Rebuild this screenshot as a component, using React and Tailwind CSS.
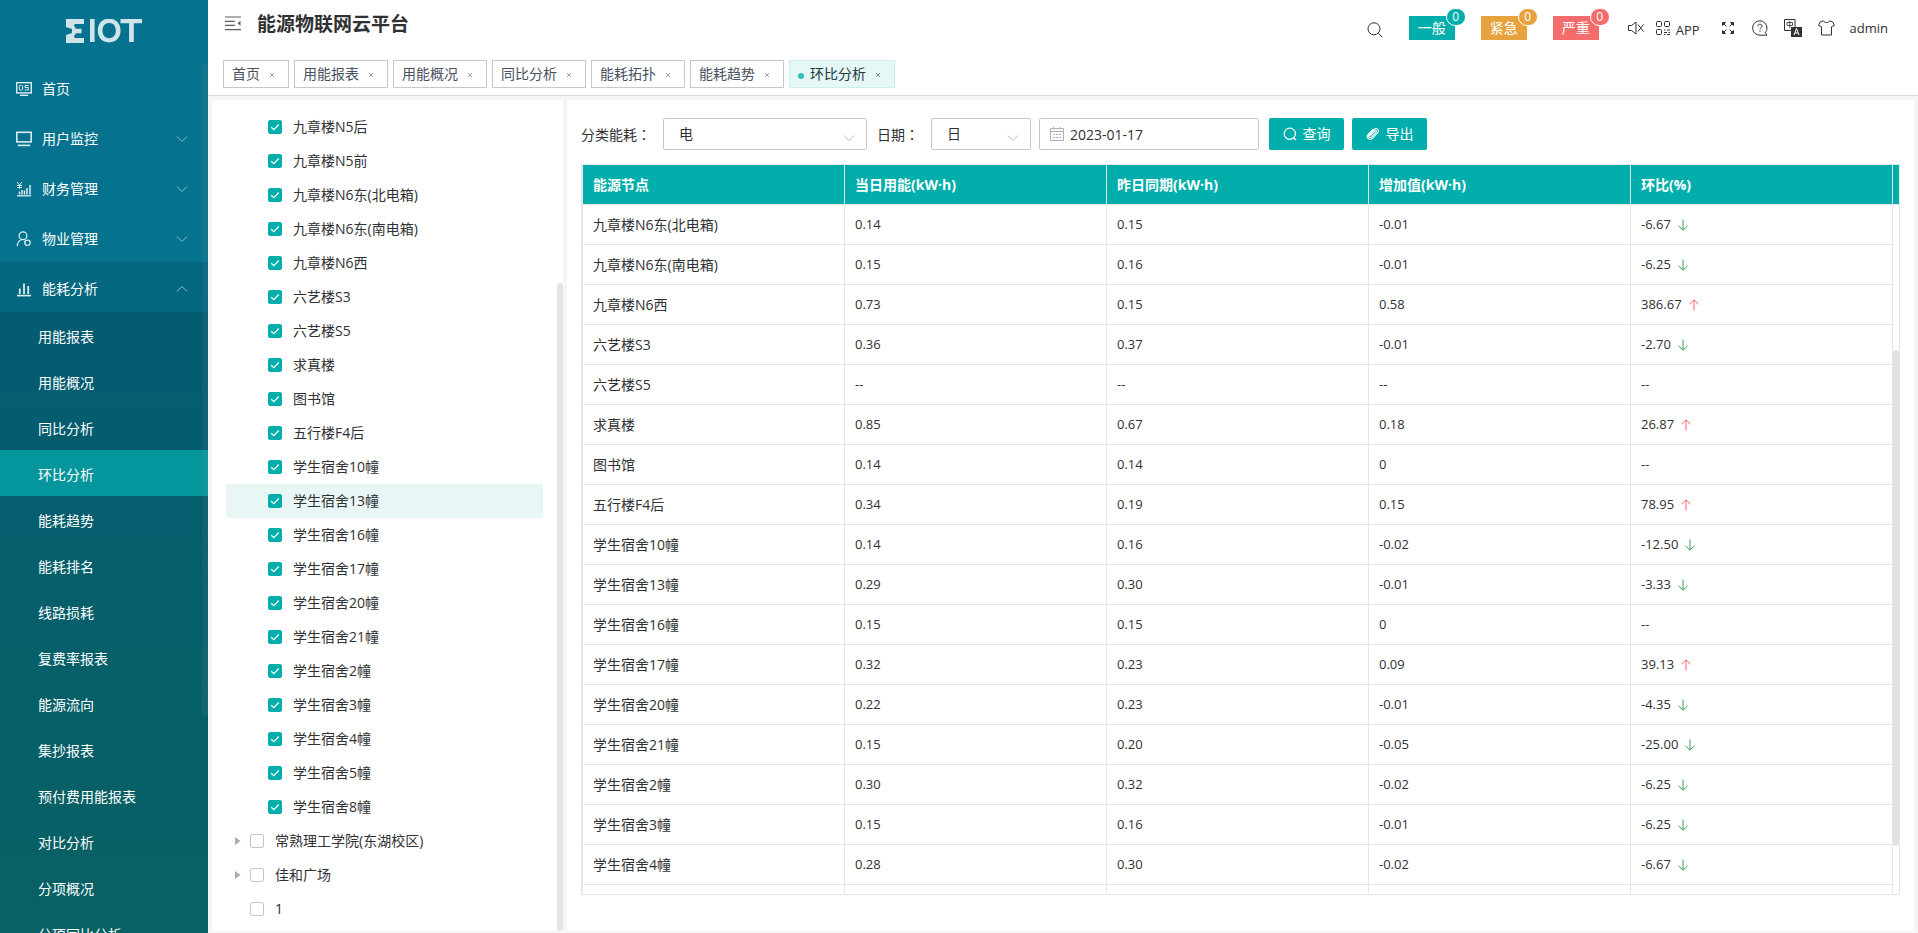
import { useState } from 'react';

const menus = [
  { name: '首页', icon: 'home' },
  { name: '用户监控', icon: 'monitor', group: true },
  { name: '财务管理', icon: 'finance', group: true },
  { name: '物业管理', icon: 'property', group: true },
  { name: '能耗分析', icon: 'chart', group: true, open: true },
];

const subMenus = [
  '用能报表', '用能概况', '同比分析', '环比分析', '能耗趋势', '能耗排名', '线路损耗',
  '复费率报表', '能源流向', '集抄报表', '预付费用能报表', '对比分析', '分项概况', '分项同比分析',
];

const tabs = ['首页', '用能报表', '用能概况', '同比分析', '能耗拓扑', '能耗趋势', '环比分析'];

const treeNodes = [
  '九章楼N5后', '九章楼N5前', '九章楼N6东(北电箱)', '九章楼N6东(南电箱)', '九章楼N6西',
  '六艺楼S3', '六艺楼S5', '求真楼', '图书馆', '五行楼F4后', '学生宿舍10幢', '学生宿舍13幢',
  '学生宿舍16幢', '学生宿舍17幢', '学生宿舍20幢', '学生宿舍21幢', '学生宿舍2幢',
  '学生宿舍3幢', '学生宿舍4幢', '学生宿舍5幢', '学生宿舍8幢',
];

const rootNodes = [
  { name: '常熟理工学院(东湖校区)', caret: true },
  { name: '佳和广场', caret: true },
  { name: '1', caret: false },
];

const columns = ['能源节点', '当日用能(kW·h)', '昨日同期(kW·h)', '增加值(kW·h)', '环比(%)'];

const rows = [
  ['九章楼N6东(北电箱)', '0.14', '0.15', '-0.01', '-6.67'],
  ['九章楼N6东(南电箱)', '0.15', '0.16', '-0.01', '-6.25'],
  ['九章楼N6西', '0.73', '0.15', '0.58', '386.67'],
  ['六艺楼S3', '0.36', '0.37', '-0.01', '-2.70'],
  ['六艺楼S5', '--', '--', '--', '--'],
  ['求真楼', '0.85', '0.67', '0.18', '26.87'],
  ['图书馆', '0.14', '0.14', '0', '--'],
  ['五行楼F4后', '0.34', '0.19', '0.15', '78.95'],
  ['学生宿舍10幢', '0.14', '0.16', '-0.02', '-12.50'],
  ['学生宿舍13幢', '0.29', '0.30', '-0.01', '-3.33'],
  ['学生宿舍16幢', '0.15', '0.15', '0', '--'],
  ['学生宿舍17幢', '0.32', '0.23', '0.09', '39.13'],
  ['学生宿舍20幢', '0.22', '0.23', '-0.01', '-4.35'],
  ['学生宿舍21幢', '0.15', '0.20', '-0.05', '-25.00'],
  ['学生宿舍2幢', '0.30', '0.32', '-0.02', '-6.25'],
  ['学生宿舍3幢', '0.15', '0.16', '-0.01', '-6.25'],
  ['学生宿舍4幢', '0.28', '0.30', '-0.02', '-6.67'],
  ['', '', '', '', ''],
];

const alarms = [
  { name: '一般', box: 'bg-[#02aeab]' },
  { name: '紧急', box: 'bg-[#e6a23c]' },
  { name: '严重', box: 'bg-[#f56c6c]' },
];

function Chevron({ up, className }) {
  return (
    <svg viewBox="0 0 12 8" fill="none" stroke="currentColor" className={className} aria-hidden="true">
      <path d={up ? 'M1 6.5 6 1.5 11 6.5' : 'M1 1.5 6 6.5 11 1.5'} />
    </svg>
  );
}

function MenuIcon({ type }) {
  const common = { viewBox: '0 0 16 16', fill: 'none', stroke: 'currentColor', className: 'size-4 shrink-0 text-[#dcecf0]', 'aria-hidden': true };
  if (type === 'home') {
    return (
      <svg {...common}>
        <rect x="0.7" y="1.7" width="14.6" height="10.2" strokeWidth="1.4" />
        <rect x="3.2" y="4.5" width="3.4" height="4.5" rx="1" />
        <path d="M12.8 4.5H9v2h3.3v2.4H8.700" />
        <path d="M4 14.3h8" strokeWidth="1.4" />
      </svg>
    );
  }
  if (type === 'monitor') {
    return (
      <svg {...common} strokeWidth="1.6">
        <rect x="0.8" y="1.3" width="14.4" height="9.6" />
        <path d="M1.8 14.4h12.4" />
      </svg>
    );
  }
  if (type === 'finance') {
    return (
      <svg {...common}>
        <path d="M1 1l2.5 3L6 1M3.5 4v4M1 4.5h5M1 6.5h5" />
        <path d="M1 14.8h14" strokeWidth="1.3" />
        <path d="M3.5 13.5v-3M6 13.5v-4.5M8.5 13.5v-4M11 13.5V7M14 13.5V4" strokeWidth="1.5" />
      </svg>
    );
  }
  if (type === 'property') {
    return (
      <svg {...common} strokeWidth="1.2">
        <circle cx="7" cy="4.700" r="3.9" />
        <path d="M1.3 15.2c0-3.4 1.7-5.6 4.2-6.4" />
        <circle cx="11.500" cy="11.800" r="2.700" />
        <path d="M8 10.500l1.500 1M10.500 15l.5-1" />
      </svg>
    );
  }
  return (
    <svg {...common}>
      <path d="M1 14.6h14" strokeWidth="1.6" />
      <path d="M3.8 13V7.5M8 13V2.5M12.2 13V5" strokeWidth="1.8" />
    </svg>
  );
}

function Trend({ value }) {
  if (!value || value === '--') return null;
  const down = value.startsWith('-');
  return (
    <svg
      viewBox="0 0 12 12"
      fill="none"
      stroke="currentColor"
      className={`ml-1.5 size-3 ${down ? 'text-[#3a9e5c]' : 'text-[#f5606c]'}`}
      aria-hidden="true"
    >
      <path d={down ? 'M6 .5v10.5M1.5 6.8 6 11.2l4.5-4.4' : 'M6 11.5V1M1.5 5.2 6 .8l4.5 4.4'} />
    </svg>
  );
}

function Sidebar() {
  return (
    <aside className="relative flex w-52 shrink-0 flex-col overflow-hidden bg-linear-to-b from-[#05738f] from-30% to-[#0b7a7c] text-sm text-white">
      <div className="flex h-[62px] shrink-0 items-center justify-center">
        <svg viewBox="0 0 76 24" className="h-6 w-[76px] text-[#cfe4ea]" fill="currentColor" role="img" aria-label="EIOT">
          <path d="M0 0h18v5H9L7.800 6.500 10 9.700h5.500v4.600H10l-2.200 3.200L9 19h9v5H0v-8l6-2v-4L0 8z" />
          <path d="M24 0h4.6v23H24z" />
          <path fillRule="evenodd" d="M43 -.3c7 0 11.6 4.9 11.6 11.9S50 23.4 43 23.4 31.8 18.6 31.8 11.6 36 -.3 43-.3zm.2 4.2c-4.2 0-6.7 3-6.7 7.7s2.5 7.6 6.7 7.6 6.600-3 6.600-7.600-2.400-7.700-6.600-7.700z" />
          <path d="M54.5 0H76v4.2h-8.200V23h-4.700V4.200h-8.600z" />
        </svg>
      </div>
      <nav>
        {menus.map((m) => (
          <button
            key={m.name}
            type="button"
            className={`flex h-[50px] w-full items-center px-4 pt-1 ${m.open ? 'bg-black/10' : ''}`}
          >
            <MenuIcon type={m.icon} />
            <span className="ml-2.5">{m.name}</span>
            {m.group && <Chevron up={m.open} className="mr-1 ml-auto h-2 w-3 text-[#8fc0cd]" />}
          </button>
        ))}
        <div className="bg-black/20">
          {subMenus.map((name) => (
            <a
              key={name}
              href="#"
              className={`flex h-[46px] items-center pt-1 pl-[38px] ${name === '环比分析' ? 'bg-[#04959d]' : ''}`}
            >
              {name}
            </a>
          ))}
        </div>
      </nav>
      {/* 菜单滚动条 */}
      <div className="pointer-events-none absolute top-16 right-0 h-[70%] w-1.5 rounded-sm bg-[#909399]/10"></div>
    </aside>
  );
}

function Header() {
  return (
    <header className="h-24 shrink-0 border-b border-[#d8dce5] bg-white">
      <div className="flex h-[60px] items-start">
        <button type="button" aria-label="收起菜单" className="mt-4 ml-[17px] text-[#5a5e66]">
          <svg viewBox="0 0 16 15" className="h-[15px] w-4" fill="none" stroke="currentColor" strokeWidth="1.2" aria-hidden="true">
            <path d="M0 1h16M0 5.3h10M0 9.3h10M0 13.7h16" />
            <path d="M15.5 4.8v5L12.5 7.3z" fill="currentColor" stroke="none" />
          </svg>
        </button>
        <h1 className="mt-2.5 ml-4 text-[19px] leading-7 font-bold text-[#303133]">能源物联网云平台</h1>

        <div className="ml-auto flex h-14 items-center pr-[30px] text-sm text-[#303133]">
          <button type="button" aria-label="搜索" className="mt-1 mr-[26px]">
            <svg viewBox="0 0 16 16" className="size-4" fill="none" stroke="currentColor" aria-hidden="true">
              <circle cx="7" cy="6.8" r="6" />
              <path d="m11.3 11.2 4.200 4.200" />
            </svg>
          </button>
          {alarms.map((a) => (
            <button key={a.name} type="button" className={`relative mr-[26px] h-6 w-[46px] leading-6 text-white ${a.box}`}>
              {a.name}
              <span className={`absolute -top-2 left-[37px] flex h-[18px] w-5 items-center justify-center rounded-full border border-white text-xs leading-4 ${a.box}`}>
                0
              </span>
            </button>
          ))}
          <button type="button" aria-label="静音" className="ml-[3px]">
            <svg viewBox="0 0 16 14" className="h-3.5 w-4" fill="none" stroke="currentColor" aria-hidden="true">
              <path d="M.5 4.5h3L8 1v12L3.500 9.500h-3zM10 3.500l5.500 7M15.500 3.500l-5.500 7" />
            </svg>
          </button>
          <button type="button" className="ml-3 flex items-center">
            <svg viewBox="0 0 14 14" className="size-3.5" fill="none" stroke="currentColor" aria-hidden="true">
              <rect x=".5" y=".5" width="5" height="5" rx="1" />
              <rect x="8.500" y=".5" width="5" height="5" rx="1" />
              <rect x=".5" y="8.500" width="5" height="5" rx="1" />
              <path d="M8 9h1.500M11 9h3M8 11.500h3M12.500 11.500H14M8 13.500h1.500M11 13.500h3" />
            </svg>
            <span className="mt-1 ml-1.5 text-[13px]">APP</span>
          </button>
          <button type="button" aria-label="全屏" className="ml-[22px]">
            <svg viewBox="0 0 12 12" className="size-3" fill="currentColor" stroke="currentColor" aria-hidden="true">
              <path d="M.5.5h3l-3 3zM11.500.5v3l-3-3zM.5 11.500v-3l3 3zM11.500 11.500h-3l3-3z" />
              <path d="m1.500 1.500 3 3M10.500 1.500l-3 3M1.500 10.500l3-3M10.500 10.500l-3-3" />
            </svg>
          </button>
          <button type="button" aria-label="帮助" className="ml-[18px]">
            <svg viewBox="0 0 16 16" className="size-4" fill="none" stroke="currentColor" aria-hidden="true">
              <path d="M15 15.200h-7a7.200 7.200 0 1 1 7-7.200c0 1.800-.6 3.300-1.700 4.600z" />
              <path d="M5.900 6.300c0-1.300.9-2.100 2.100-2.100s2.100.8 2.100 1.900c0 1.500-2.100 1.700-2.100 3.300M8 10.600v1.200" />
            </svg>
          </button>
          <button type="button" aria-label="语言" className="ml-4">
            <svg viewBox="0 0 18 18" className="size-[18px]" aria-hidden="true">
              <path d="M.5.5h10.500v11H.5z" fill="none" stroke="currentColor" />
              <path d="M3 3.500h5.500v3H3zM5.750 2v7" fill="none" stroke="currentColor" strokeWidth=".8" />
              <path d="M7 8h11v10H7z" fill="currentColor" />
              <path d="m10 16 2.500-6.500L15 16M11 14h3" fill="none" stroke="#fff" />
            </svg>
          </button>
          <button type="button" aria-label="主题" className="ml-4">
            <svg viewBox="0 0 17 16" className="h-4 w-[17px]" fill="none" stroke="currentColor" aria-hidden="true">
              <path d="M5.500.8 2 2.200.6 5.500l2.900 1.200v8.300h10V6.700l2.900-1.200L15 2.200 11.500.8c-1 2.400-5 2.400-6 0z" />
            </svg>
          </button>
          <button type="button" className="ml-[15px] text-[13px]">admin</button>
        </div>
      </div>

      <div className="flex gap-[5px] pl-[15px] text-sm">
        {tabs.map((t) => {
          const active = t === '环比分析';
          return (
            <a
              key={t}
              href="#"
              className={`flex h-7 items-center border px-2 ${
                active ? 'border-[#ccefee] bg-[#e5f7f7] text-[#1d3a3c]' : 'border-[#c8c8c8] bg-white text-[#495060]'
              }`}
            >
              {active && <span className="mt-1 mr-1.5 size-1.5 rounded-full bg-[#30bfbb]"></span>}
              {t}
              <svg viewBox="0 0 16 16" className="mt-0.5 ml-1 size-4 opacity-60" stroke="currentColor" strokeWidth="0.9" aria-hidden="true">
                <path d="m6 6 4 4M10 6l-4 4" />
              </svg>
            </a>
          );
        })}
      </div>
    </header>
  );
}

function TreeRow({ name, leaf, caret, active }) {
  const [checked, setChecked] = useState(!!leaf);
  return (
    <label className={`flex h-[34px] items-center ${leaf ? 'pl-[18px]' : ''} ${active ? 'bg-[#e8f7f6]' : ''}`}>
      <span className="flex w-6 justify-center">
        {caret && (
          <svg viewBox="0 0 6 8" className="h-2 w-1.5 text-[#a8abb2]" fill="currentColor" aria-hidden="true">
            <path d="M0 0l5.500 4L0 8z" />
          </svg>
        )}
      </span>
      <span className="relative mr-[11px] size-3.5">
        <input
          type="checkbox"
          checked={checked}
          onChange={(e) => setChecked(e.target.checked)}
          className="block size-3.5 appearance-none rounded-xs border border-[#c4c6ca] bg-white checked:border-[#02aeab] checked:bg-[#02aeab]"
        />
        {checked && (
          <svg viewBox="0 0 14 14" className="pointer-events-none absolute inset-0 text-white" fill="none" stroke="currentColor" strokeWidth="1.2" aria-hidden="true">
            <path d="m3.200 7.200 2.600 2.500 5-5.200" />
          </svg>
        )}
      </span>
      {name}
    </label>
  );
}

function Tree() {
  return (
    <section className="flex w-[351px] shrink-0 bg-white text-sm text-[#303133]">
      <div className="flex-1 overflow-hidden px-3.5 pt-2.5">
        {treeNodes.map((n) => (
          <TreeRow key={n} name={n} leaf active={n === '学生宿舍13幢'} />
        ))}
        {rootNodes.map((n) => (
          <TreeRow key={n.name} name={n.name} caret={n.caret} />
        ))}
      </div>
      <div className="flex w-1.5 flex-col justify-end">
        <div className="h-[78%] rounded-full bg-[#e4e4e4]"></div>
      </div>
    </section>
  );
}

function SelectBox({ id, value, width }) {
  return (
    <div className={`relative ${width}`}>
      <select
        id={id}
        defaultValue={value}
        className="h-8 w-full appearance-none rounded-xs border border-[#c8c8c8] bg-white pr-8 pl-[15px] text-sm text-[#303133]"
      >
        <option>{value}</option>
      </select>
      <Chevron className="pointer-events-none absolute top-4 right-3 h-2 w-3 text-[#b4b8bf]" />
    </div>
  );
}

function Filters() {
  return (
    <div className="flex items-center text-sm text-[#303133]">
      <label htmlFor="energy" className="pr-3">
        分类能耗<span className="font-['Noto_Sans_CJK_TC',sans-serif]" lang="zh-TW">：</span>
      </label>
      <SelectBox id="energy" value="电" width="w-[204px]" />
      <label htmlFor="cycle" className="ml-2.5 pr-3">
        日期<span className="font-['Noto_Sans_CJK_TC',sans-serif]" lang="zh-TW">：</span>
      </label>
      <SelectBox id="cycle" value="日" width="w-[100px]" />
      <div className="relative ml-2 w-[220px]">
        <svg viewBox="0 0 14 14" className="absolute top-[9px] left-[11px] size-3.5 text-[#aeb2b8]" fill="none" stroke="currentColor" aria-hidden="true">
          <path d="M.5 1.500h13v12H.5zM.5 4.500h13M3.500 0v2.500M10.500 0v2.500" />
          <path d="M3 7.500h2M6 7.500h2M9 7.500h2M3 10.500h2M6 10.500h2M9 10.500h2" />
        </svg>
        <input
          type="text"
          aria-label="选择日期"
          defaultValue="2023-01-17"
          className="block h-8 w-full rounded-xs border border-[#c8c8c8] bg-white pl-[30px] text-sm"
        />
      </div>
      <button type="button" className="ml-2.5 flex h-8 w-[75px] items-center justify-center gap-1.5 rounded-xs bg-[#02aeab] text-white">
        <svg viewBox="0 0 14 14" className="size-3.5" fill="none" stroke="currentColor" strokeWidth="1.2" aria-hidden="true">
          <circle cx="6.800" cy="6.800" r="5.600" />
          <path d="m10.800 10.800 2.200 2.200" />
        </svg>
        查询
      </button>
      <button type="button" className="ml-2 flex h-8 w-[75px] items-center justify-center gap-1.5 rounded-xs bg-[#02aeab] text-white">
        <svg viewBox="0 0 14 14" className="size-3.5" fill="none" stroke="currentColor" strokeWidth="1.1" strokeLinecap="round" aria-hidden="true">
          <path d="M4 8.800 8.800 3.800c.8-.8 2.200.4 1.400 1.300L5.500 10.200c-1.600 1.600-4-.6-2.500-2.200L8.200 2.500c2.300-2.300 5.700.8 3.500 3.200L6.500 11.300c-2.800 2.900-7-.8-4.500-3.700L7 2.300" />
        </svg>
        导出
      </button>
    </div>
  );
}

function DataTable() {
  return (
    <div className="mt-3.5 flex min-h-0 flex-1 overflow-hidden border border-l-2 border-[#e6e6e6] text-sm text-[#303133]">
      <div className="flex-1 overflow-hidden">
        <table className="w-full table-fixed border-separate border-spacing-0">
          <thead>
            <tr className="h-10 bg-[#02aeab] text-left text-white">
              {columns.map((c) => (
                <th key={c} className="border-r border-b border-[#e6e6e6] px-2.5 font-bold">{c}</th>
              ))}
            </tr>
          </thead>
          <tbody>
            {rows.map((r) => (
              <tr key={r[0]} className="h-10">
                <td className="border-r border-b border-[#e6e6e6] px-2.5">{r[0]}</td>
                {r.slice(1).map((v, i) => (
                  <td key={i} className="border-r border-b border-[#e6e6e6] px-2.5 text-[13px]">
                    <span className="flex items-center">
                      {v}
                      {i === 3 && <Trend value={v} />}
                    </span>
                  </td>
                ))}
              </tr>
            ))}
          </tbody>
        </table>
      </div>
      <div className="flex w-1.5 flex-col">
        <div className="h-10 shrink-0 border-b border-[#e6e6e6] bg-[#02aeab]"></div>
        <div className="flex-1">
          <div className="h-[21%]"></div>
          <div className="h-[72%] rounded-full bg-[#e2e2e2]"></div>
        </div>
      </div>
    </div>
  );
}

export default function App() {
  return (
    <div className="flex h-screen overflow-hidden bg-[#f6f6f6] font-['Open_Sans','Noto_Sans_CJK_SC',sans-serif]">
      <Sidebar />
      <div className="flex min-w-0 flex-1 flex-col">
        <Header />
        <main className="flex min-h-0 flex-1 gap-1 px-1 pt-1 pb-0.5">
          <Tree />
          <section className="flex min-w-0 flex-1 flex-col bg-white px-3.5 pt-[18px] pb-9">
            <Filters />
            <DataTable />
          </section>
        </main>
      </div>
    </div>
  );
}
